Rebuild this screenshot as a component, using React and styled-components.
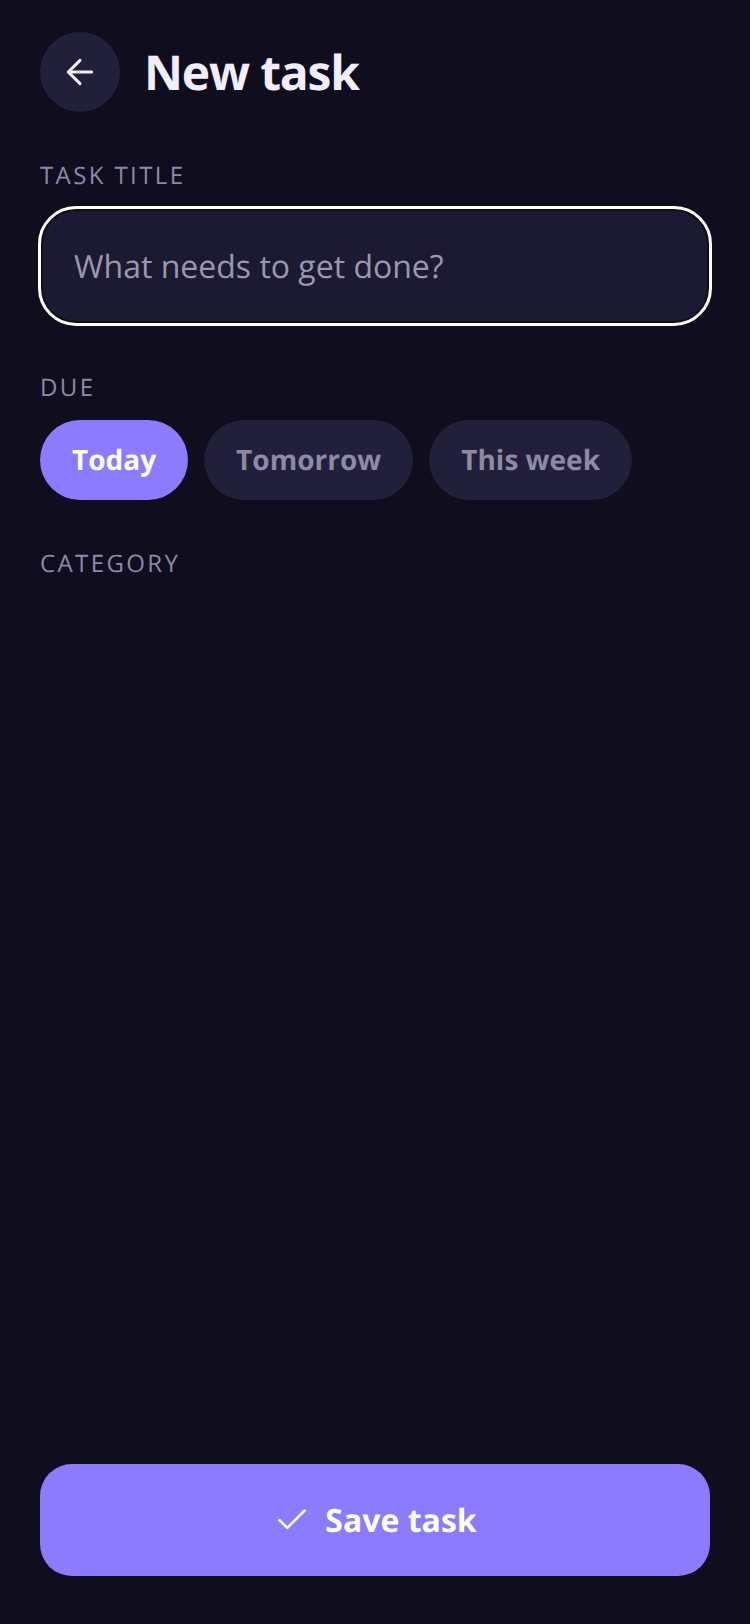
import React from 'react';
import styled, { createGlobalStyle } from 'styled-components';
import { ArrowLeft, Check } from 'lucide-react';

const GlobalStyle = createGlobalStyle`
  html, body {
    margin: 0;
    background: #0f0d1e;
  }
  * {
    box-sizing: border-box;
  }
`;

const Screen = styled.div`
  width: 750px;
  height: 1624px;
  padding: 32px 40px 48px;
  display: flex;
  flex-direction: column;
  background: #0f0d1e;
  font-family: "Open Sans", "Liberation Sans", sans-serif;
  text-rendering: geometricPrecision;
`;

const Header = styled.header`
  display: flex;
  align-items: center;
  gap: 24px;
  margin-bottom: 48px;
`;

const BackButton = styled.button`
  width: 80px;
  height: 80px;
  padding: 0;
  border: 0;
  border-radius: 50%;
  display: flex;
  align-items: center;
  justify-content: center;
  background: #221f3a;
  color: #f1eeff;
`;

const Title = styled.h1`
  margin: 0;
  padding-top: 2px;
  font-size: 48px;
  line-height: 78px;
  font-weight: 700;
  letter-spacing: -1.2px;
  color: #f1eeff;
`;

const Label = styled.div`
  font-size: 24px;
  line-height: 32px;
  font-weight: 400;
  letter-spacing: 2.4px;
  color: #8d89a8;
  margin-bottom: 16px;
`;

const TitleInput = styled.input`
  display: block;
  width: 670px;
  height: 116px;
  padding: 0 31px;
  margin-bottom: 48px;
  border: 3px solid #0f0f14;
  border-radius: 36px;
  outline: 3px solid #ffffff;
  outline-offset: -1px;
  background: #1c1a32;
  font-family: inherit;
  font-size: 32px;
  color: #f1eeff;
  text-rendering: geometricPrecision;

  &::placeholder {
    color: #9a97ae;
    opacity: 1;
  }
`;

const Chips = styled.div`
  display: flex;
  gap: 16px;
  margin-bottom: 48px;
`;

const Chip = styled.button`
  height: 80px;
  padding: 0 32px;
  border: 0;
  border-radius: 40px;
  background: ${(p) => (p.$active ? '#8c7bff' : '#221f3a')};
  color: ${(p) => (p.$active ? '#ffffff' : '#8d89a8')};
  font-family: inherit;
  font-size: 28px;
  font-weight: 700;
  text-rendering: geometricPrecision;
`;

const Spacer = styled.div`
  flex: 1;
`;

const SaveButton = styled.button`
  height: 112px;
  border: 0;
  border-radius: 32px;
  display: flex;
  align-items: center;
  justify-content: center;
  gap: 14px;
  background: #8c7bff;
  color: #ffffff;
  font-family: inherit;
  font-size: 32px;
  font-weight: 700;
  text-rendering: geometricPrecision;
`;

export default function App() {
  return (
    <Screen>
      <GlobalStyle />
      <Header>
        <BackButton aria-label="Back">
          <ArrowLeft size={40} strokeWidth={1.8} />
        </BackButton>
        <Title>New task</Title>
      </Header>
      <Label>TASK TITLE</Label>
      <TitleInput placeholder="What needs to get done?" />
      <Label>DUE</Label>
      <Chips>
        <Chip $active>Today</Chip>
        <Chip>Tomorrow</Chip>
        <Chip>This week</Chip>
      </Chips>
      <Label>CATEGORY</Label>
      <Spacer />
      <SaveButton>
        <Check size={38} strokeWidth={1.6} />
        Save task
      </SaveButton>
    </Screen>
  );
}
